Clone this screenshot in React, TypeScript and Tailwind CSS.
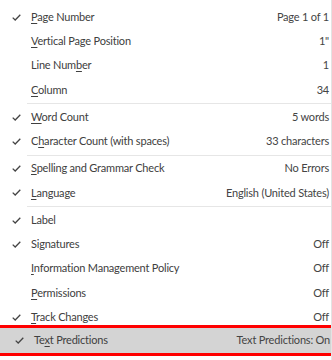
import React from "react";

type Row = { label: React.ReactNode; value?: string; checked?: boolean; sepAfter?: boolean; active?: boolean };

function U({ children }: { children: string }) {
  return <span className="underline underline-offset-2 decoration-1">{children}</span>;
}

const rows: Row[] = [
  { label: <><U>P</U>age Number</>, value: "Page 1 of 1", checked: true },
  { label: <><U>V</U>ertical Page Position</>, value: "1\"" },
  { label: <>Line Num<U>b</U>er</>, value: "1" },
  { label: <><U>C</U>olumn</>, value: "34", sepAfter: true },
  { label: <><U>W</U>ord Count</>, value: "5 words", checked: true },
  { label: <>C<U>h</U>aracter Count (with spaces)</>, value: "33 characters", checked: true, sepAfter: true },
  { label: <><U>S</U>pelling and Grammar Check</>, value: "No Errors", checked: true },
  { label: <><U>L</U>anguage</>, value: "English (United States)", checked: true, sepAfter: true },
  { label: <>Label</>, checked: true },
  { label: <>Signatures</>, value: "Off", checked: true },
  { label: <><U>I</U>nformation Management Policy</>, value: "Off" },
  { label: <><U>P</U>ermissions</>, value: "Off" },
  { label: <><U>T</U>rack Changes</>, value: "Off", checked: true },
  { label: <>Te<U>x</U>t Predictions</>, value: "Text Predictions: On", checked: true, active: true },
];

function Check() {
  return (
    <svg width="9" height="7" viewBox="0 0 9 7" className="text-[#444]">
      <path d="M0.7 3.6 L3.2 6 L8.3 0.8" fill="none" stroke="currentColor" strokeWidth="1.3" />
    </svg>
  );
}

export default function App() {
  return (
    <div className="w-[332px] h-[360px] bg-white overflow-hidden pt-[5px] text-[11px] tracking-[-0.2px] text-[#404040] border-r border-[#e3e3e3]" style={{ fontFamily: 'Lato, "Noto Sans", sans-serif' }}>
      {rows.map((r, i) => (
        <div key={i}>
          <div className={r.active ? "border-[3px] border-[#ff0000] -mt-[4px] -mr-px" : ""}>
            <div className={`flex items-center h-[24.25px] pr-[2px] ${r.active ? "bg-[#d4d4d4] -mx-[3px] pr-[2px]" : ""}`}>
              <div className={`w-[31px] flex justify-center pl-[2px] ${r.active ? "ml-[3px] w-[28px]" : ""}`}>{r.checked && <Check />}</div>
              <div className="flex-1 whitespace-nowrap">{r.label}</div>
              {r.value && <div className="whitespace-nowrap text-[#444]">{r.value}</div>}
            </div>
          </div>
          {r.sepAfter && (
            <div className="h-[3px] flex items-center pl-[27px]">
              <div className="h-px w-full bg-[#e6e6e6]" />
            </div>
          )}
        </div>
      ))}
    </div>
  );
}
